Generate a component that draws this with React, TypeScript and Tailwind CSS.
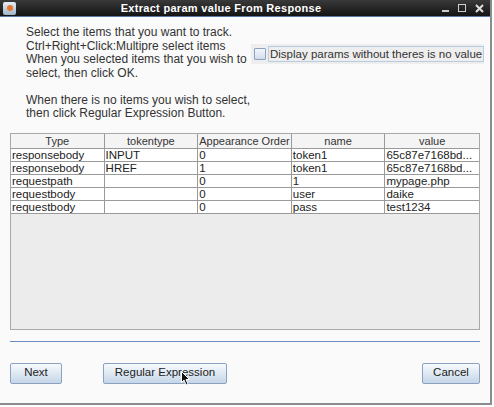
const rows = [
  ["responsebody", "INPUT", "0", "token1", "65c87e7168bd..."],
  ["responsebody", "HREF", "1", "token1", "65c87e7168bd..."],
  ["requestpath", "", "0", "1", "mypage.php"],
  ["requestbody", "", "0", "user", "daike"],
  ["requestbody", "", "0", "pass", "test1234"],
];

const headers = ["Type", "tokentype", "Appearance Order", "name", "value"];

function Btn({ label, w }: { label: string; w: string }) {
  return (
    <div
      className={`${w} h-[21px] flex items-center justify-center border border-[#8aa2c0] rounded-[2px] bg-gradient-to-b from-[#f7fafd] to-[#c5d6e8] text-[11.5px] text-[#222]`}
    >
      {label}
    </div>
  );
}

export default function App() {
  return (
    <div className="w-[494px] h-[407px] bg-white relative overflow-hidden" style={{ fontFamily: "'Liberation Sans', Arial, sans-serif" }}>
      <div className="w-[492px] h-[405px] flex flex-col border-r-2 border-b-2 border-[#8c8c8c] bg-[#fafafa]">
        {/* title bar */}
        <div className="h-[17px] shrink-0 flex items-center bg-gradient-to-b from-[#3a3a3a] to-[#141414] border-b border-[#5a7aa8]">
          <div className="w-[13px] h-[13px] ml-[3px] rounded-[2px] bg-gradient-to-b from-[#e6eef7] to-[#9fb4cc] flex items-center justify-center shrink-0">
            <div className="w-[6px] h-[6px] rounded-full bg-[#e8762a]" />
          </div>
          <div className="flex-1 text-center text-white text-[11px] font-bold tracking-[0.3px] -ml-[16px]">Extract param value From Response</div>
          <div className="flex items-center gap-[9px] mr-[6px] shrink-0">
            <div className="w-[7px] h-[2px] bg-[#ccc] mt-[6px]" />
            <div className="w-[8px] h-[8px] border-[1.5px] border-[#ccc]" />
            <svg width="9" height="9" viewBox="0 0 9 9"><path d="M1 1L8 8M8 1L1 8" stroke="#ddd" strokeWidth="2" /></svg>
          </div>
        </div>

        {/* top area */}
        <div className="flex pt-[9px]">
          <div className="pl-[26px] text-[12px] leading-[13.5px] text-[#333] w-[251px] shrink-0 whitespace-nowrap">
            <div>Select the items that you want to track.</div>
            <div>Ctrl+Right+Click:Multipre select items</div>
            <div>When you selected items that you wish to</div>
            <div>select, then click OK.</div>
            <div className="h-[13.5px]" />
            <div>When there is no items you wish to select,</div>
            <div>then click Regular Expression Button.</div>
          </div>
          <div className="mt-[18px] h-[20px] w-[233px] bg-[#eeeeee] flex items-center pl-[3px] gap-[2px] self-start">
            <div className="w-[12px] h-[12px] shrink-0 border border-[#8aa2c0] bg-gradient-to-b from-[#f4f7fb] to-[#d2ddea] rounded-[1px]" />
            <div className="border border-[#b8cbe0] px-[1px] text-[11.5px] leading-[14px] text-[#333] whitespace-nowrap">Display params without theres is no value</div>
          </div>
        </div>

        {/* table */}
        <div className="mt-[12px] mx-[10px] h-[197px] border border-[#a8a8a8] bg-[#ececec] flex flex-col">
          <div className="grid grid-cols-5 bg-[#f4f4f4] border-b border-[#9a9a9a]">
            {headers.map((h, i) => (
              <div key={h} className={`h-[14px] text-[11px] leading-[14px] text-center text-[#333] whitespace-nowrap ${i < 4 ? "border-r border-[#9a9a9a]" : ""}`}>{h}</div>
            ))}
          </div>
          {rows.map((r, ri) => (
            <div key={ri} className="grid grid-cols-5 bg-white">
              {r.map((c, ci) => (
                <div key={ci} className={`h-[13px] text-[11.5px] leading-[13px] pl-[1px] text-[#222] border-b border-[#9a9a9a] ${ci < 4 ? "border-r" : ""} whitespace-nowrap overflow-hidden`}>{c}</div>
              ))}
            </div>
          ))}
        </div>

        <div className="mt-[11px] mx-[10px] h-px bg-[#6b8ec0]" />

        <div className="mt-[21px] flex items-center px-[10px]">
          <Btn label="Next" w="w-[52px]" />
          <div className="ml-[41px]"><Btn label="Regular Expression" w="w-[124px]" /></div>
          <div className="flex-1" />
          <Btn label="Cancel" w="w-[58px]" />
        </div>
      </div>

      {/* mouse cursor */}
      <svg className="absolute left-[181px] top-[371px]" width="10" height="15" viewBox="0 0 10 15">
        <path d="M0.5 0.5L0.5 11.5L3 9L5 14L7 13L5 8.5L8.5 8.5Z" fill="#111" stroke="#fff" strokeWidth="1" />
      </svg>
    </div>
  );
}
